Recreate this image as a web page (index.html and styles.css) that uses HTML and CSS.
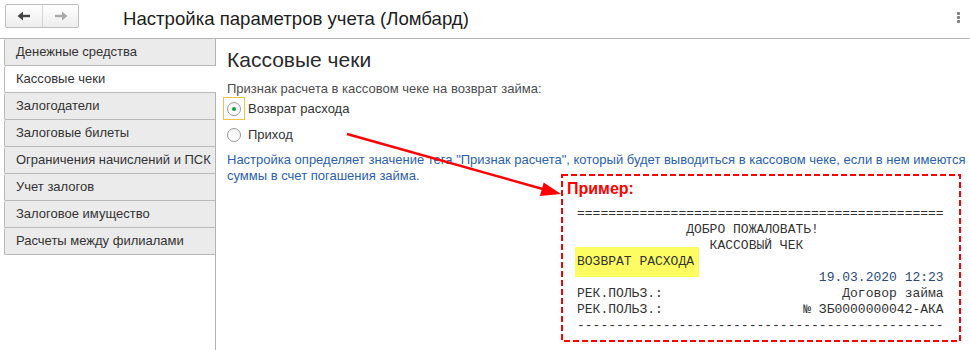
FILE: index.html
```html
<!DOCTYPE html>
<html lang="ru">
<head>
    <meta charset="UTF-8">
    <title>Настройка параметров учета (Ломбард)</title>
    <link rel="stylesheet" href="styles.css">
</head>
<body>
    <div class="page">
        <header class="topbar">
            <div class="nav-buttons">
                <button class="nav-btn">
                    <svg width="14" height="10" viewBox="0 0 14 10"><path d="M13 5H5" stroke="#444" stroke-width="2.4"/><path d="M0.5 5L6 0.5V9.5Z" fill="#444"/></svg>
                </button>
                <button class="nav-btn nav-btn-disabled">
                    <svg width="14" height="10" viewBox="0 0 14 10"><path d="M1 5H9" stroke="#aaa" stroke-width="2.4"/><path d="M13.5 5L8 0.5V9.5Z" fill="#aaa"/></svg>
                </button>
            </div>
            <h1 class="form-title">Настройка параметров учета (Ломбард)</h1>
            <div class="more-menu"><span></span><span></span><span></span></div>
        </header>

        <div class="workspace">
            <ul class="sections">
                <li class="section">Денежные средства</li>
                <li class="section section-active">Кассовые чеки</li>
                <li class="section">Залогодатели</li>
                <li class="section">Залоговые билеты</li>
                <li class="section">Ограничения начислений и ПСК</li>
                <li class="section">Учет залогов</li>
                <li class="section">Залоговое имущество</li>
                <li class="section">Расчеты между филиалами</li>
            </ul>

            <main class="content">
                <h2 class="content-title">Кассовые чеки</h2>
                <div class="field-label">Признак расчета в кассовом чеке на возврат займа:</div>

                <div class="radio-row">
                    <span class="radio-focus focused"><span class="radio checked"></span></span>
                    <span>Возврат расхода</span>
                </div>
                <div class="radio-row">
                    <span class="radio-focus"><span class="radio"></span></span>
                    <span>Приход</span>
                </div>

                <p class="hint">
                    <span class="hint-line">Настройка определяет значение тега "Признак расчета", который будет выводиться в кассовом чеке, если в нем имеются</span>
                    <span class="hint-line">суммы в счет погашения займа.</span>
                </p>

                <div class="example">
                    <svg class="example-frame" width="400" height="168" viewBox="0 0 400 168">
                        <rect x="1" y="1" width="398" height="166" fill="none" stroke="#ff0000" stroke-width="2" stroke-dasharray="6 3"/>
                    </svg>
                    <div class="example-title">Пример:</div>
<pre class="receipt">===============================================
              ДОБРО ПОЖАЛОВАТЬ!
                 КАССОВЫЙ ЧЕК
<span class="marked">ВОЗВРАТ РАСХОДА</span>
                               <span class="receipt-date">19.03.2020 12:23</span>
РЕК.ПОЛЬЗ.:                       Договор займа
РЕК.ПОЛЬЗ.:                  № ЗБ0000000042-АКА
-----------------------------------------------</pre>
                </div>
            </main>
        </div>

        <!-- стрелка-пояснение поверх формы -->
        <svg class="callout-arrow" width="970" height="350" viewBox="0 0 970 350">
            <line x1="347" y1="134" x2="548" y2="190.5" stroke="#ff0000" stroke-width="2.5"/>
            <path d="M561 194 L543.7 182.5 L539.9 196 Z" fill="#ff0000"/>
        </svg>
    </div>
</body>
</html>
```

FILE: styles.css
```css
body {
    margin: 0;
    font-family: "Liberation Sans", Arial, sans-serif;
    background-color: #fff;
    color: #333;
}

.page {
    position: relative;
    width: 970px;
    height: 350px;
    overflow: hidden;
}

.topbar {
    display: flex;
    align-items: center;
    height: 38px;
    padding-left: 5px;
    padding-right: 10px;
    box-sizing: border-box;
}

.nav-buttons {
    display: flex;
    align-self: flex-start;
    margin-top: 4px;
    border: 1px solid #bdbdbd;
    border-radius: 2px;
    background: linear-gradient(#ffffff, #ededed);
}

.nav-btn {
    display: flex;
    align-items: center;
    justify-content: center;
    width: 36px;
    height: 22px;
    padding: 0;
    border: none;
    background: transparent;
}

.nav-btn + .nav-btn {
    border-left: 1px solid #d6d6d6;
}

.form-title {
    margin: 0 0 0 44px;
    font-size: 18.6px;
    font-weight: normal;
    color: #1d1d1d;
    flex: 1;
}

.more-menu {
    display: flex;
    flex-direction: column;
    gap: 1px;
    margin-top: -3px;
}

.more-menu span {
    width: 3px;
    height: 3px;
    border-radius: 1px;
    background-color: #7d7d7d;
}

.workspace {
    display: flex;
    border-top: 1px solid #b3b3b3;
    height: 311px;
}

.sections {
    list-style: none;
    margin: 0;
    padding: 0 0 0 4px;
    width: 216px;
    box-sizing: border-box;
    border-right: 1px solid #b3b3b3;
}

.section {
    height: 26px;
    line-height: 26px;
    padding-left: 11px;
    font-size: 13px;
    color: #333;
    background-color: #ebebeb;
    border-left: 1px solid #b9b9b9;
    border-bottom: 1px solid #b9b9b9;
    border-radius: 2px 0 0 2px;
}

.section-active {
    background-color: #fff;
    margin-right: -1px;
}

.content {
    flex: 1;
    padding: 0 4px 0 11px;
}

.content-title {
    margin: 9px 0 0;
    font-size: 21px;
    line-height: 24px;
    font-weight: normal;
    color: #2b2b2b;
}

.field-label {
    margin-top: 9px;
    font-size: 13px;
    line-height: 16px;
    color: #4d4d4d;
}

.radio-row {
    display: flex;
    align-items: center;
    gap: 3px;
    height: 23px;
    margin-left: -4px;
    font-size: 13px;
    color: #333;
}

.radio-row + .radio-row {
    margin-top: 3px;
}

.radio-focus {
    display: flex;
    align-items: center;
    justify-content: center;
    width: 22px;
    height: 23px;
    box-sizing: border-box;
    border: 1px solid transparent;
}

.radio-focus.focused {
    border-color: #f1c14a;
}

.radio {
    position: relative;
    width: 14px;
    height: 14px;
    box-sizing: border-box;
    border: 1px solid #9a9a9a;
    border-radius: 50%;
    background: linear-gradient(#f4f4f4, #ffffff);
}

.radio.checked::after {
    content: "";
    position: absolute;
    left: 4px;
    top: 4px;
    width: 4px;
    height: 4px;
    border-radius: 50%;
    background-color: #1e9a48;
}

.hint {
    margin: 6px 0 0;
    font-size: 13px;
    line-height: 16px;
    color: #2c5fae;
}

.hint-line {
    display: block;
    width: fit-content;
    white-space: nowrap;
}

.example {
    position: relative;
    width: 400px;
    height: 168px;
    margin: -10px 0 0 334px;
    box-sizing: border-box;
    padding: 6px 0 0 6px;
}

.example-frame {
    position: absolute;
    left: 0;
    top: 0;
}

.example-title {
    font-size: 16px;
    line-height: 17px;
    font-weight: bold;
    color: #f00;
}

.receipt {
    margin: 9px 0 0 10px;
    font-family: "Liberation Mono", "Courier New", monospace;
    font-size: 13px;
    line-height: 16px;
    color: #333;
}

.marked {
    background-color: #fdfd62;
    padding: 7px 5px 8px 2px;
    margin-left: -2px;
}

.receipt-date {
    color: #2b4a7a;
}

.callout-arrow {
    position: absolute;
    left: 0;
    top: 0;
    pointer-events: none;
}
```
